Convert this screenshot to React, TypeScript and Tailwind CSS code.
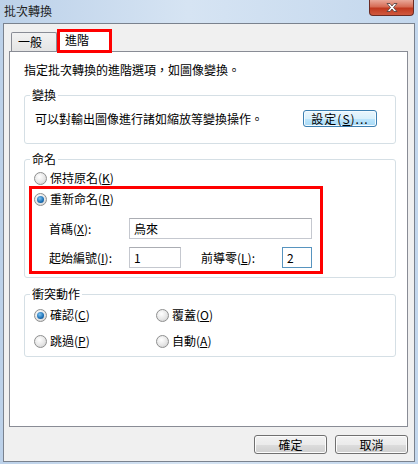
import React from 'react';

function Radio({ checked, label, hot }: { checked?: boolean; label: string; hot: string }) {
  return (
    <div className="flex h-[14px] items-center gap-[3px]">
      <span className="flex h-[13px] w-[13px] items-center justify-center rounded-full border border-[#8e8f8f] bg-[radial-gradient(circle_at_40%_35%,#ffffff,#e6e6e6_55%,#c9c9c9)]">
        {checked && (
          <span className="h-[7px] w-[7px] rounded-full bg-[radial-gradient(circle_at_40%_35%,#7fc3f0,#1b6fb5_60%,#0d3f74)]" />
        )}
      </span>
      <span className="leading-[14px]">
        {label}(<span className="underline">{hot}</span>)
      </span>
    </div>
  );
}

// group box with caption sitting on the top border line
function Group({ title, className, children }: { title: string; className?: string; children: React.ReactNode }) {
  return (
    <div className={`rounded-[3px] border border-[#d5dfe5] ${className ?? ''}`}>
      <div className="-mt-[8px] ml-[5px] w-fit bg-white px-[2px] leading-[14px]">{title}</div>
      {children}
    </div>
  );
}

function Field({ value, width, focused }: { value: string; width: string; focused?: boolean }) {
  return (
    <div
      className={`flex h-[21px] items-center border bg-white pl-[4px] ${width} ${
        focused ? 'border-[#5794bf]' : 'border-[#c5c8cf] border-t-[#abadb3]'
      }`}
    >
      {value}
    </div>
  );
}

function DlgButton({ children }: { children: React.ReactNode }) {
  return (
    <button className="flex h-[19px] w-[73px] items-center justify-center rounded-[3px] border border-[#707070] bg-[linear-gradient(#f2f2f2,#ebebeb_50%,#dddddd_51%,#cfcfcf)] leading-[14px] shadow-[inset_0_0_0_1px_#fcfcfc]">
      {children}
    </button>
  );
}

export default function App() {
  return (
    <div className="flex h-[464px] w-[418px] flex-col bg-[linear-gradient(to_right,#bcd1e9,#d6e4f3_45%,#c3d7ed)] font-['Noto_Sans_CJK_TC','Liberation_Sans',sans-serif] text-[12px] text-black">
      {/* title bar */}
      <div className="flex h-[23px] items-start justify-between pl-[4px] pr-[4px]">
        <span className="pt-[4px] leading-[14px] text-[#1e1e1e]">批次轉換</span>
        <div className="flex h-[16px] w-[45px] items-center justify-center rounded-b-[4px] border border-t-0 border-[#6b2b23] bg-[linear-gradient(#e9a899,#d66c55_45%,#c0391f_55%,#d0593f)]">
          <svg width="14" height="11" viewBox="0 0 14 11">
            <path
              d="M2 1.5h3l2 2.5 2-2.5h3l-3.5 4 3.5 4h-3l-2-2.5-2 2.5h-3l3.5-4z"
              fill="#fff"
              stroke="#4a3a3a"
              strokeWidth="0.8"
              strokeLinejoin="round"
            />
          </svg>
        </div>
      </div>

      {/* client area */}
      <div className="mx-[3px] flex h-[439px] flex-col border border-[#7a828e] bg-[#f0f0f0]">
        {/* tabs */}
        <div className="relative z-10 flex h-[27px] items-end pl-[7px]">
          <div className="flex h-[19px] w-[46px] items-center rounded-t-[2px] border border-b-0 border-[#898c95] bg-[linear-gradient(#f2f2f2,#e4e4e4)] pl-[6px] leading-[14px]">
            一般
          </div>
          <div className="mb-[-2px] flex h-[24px] w-[55px] items-start border-[3px] border-[#ff0000] bg-white pl-[5px] pt-[1px] leading-[14px]">
            進階
          </div>
        </div>

        {/* panel */}
        <div className="ml-[5px] flex h-[376px] w-[399px] flex-col border border-[#898c95] bg-white pl-[14px] pr-[11px]">
          <p className="pt-[11px] leading-[14px]">指定批次轉換的進階選項，如圖像變換。</p>

          <Group title="變換" className="mt-[18px] h-[49px]">
            <div className="flex items-center justify-between pl-[10px] pr-[18px] pt-[8px]">
              <span className="leading-[14px]">可以對輸出圖像進行諸如縮放等變換操作。</span>
              <button className="flex h-[17px] w-[74px] items-center justify-center rounded-[3px] border border-[#3c7fb1] bg-[linear-gradient(#eaf6fd,#d9f0fc_50%,#bee6fd_51%,#a7d9f5)] leading-[14px] tracking-[1px] shadow-[inset_0_0_0_1px_#f4fbff]">
                設定(<span className="underline">S</span>)...
              </button>
            </div>
          </Group>

          <Group title="命名" className="mt-[15px] h-[119px]">
            <div className="pl-[9px] pt-[5px]">
              <Radio label="保持原名" hot="K" />
            </div>
            <div className="ml-[4px] mt-[1px] h-[88px] w-[294px] border-[3px] border-[#ff0000] pl-[2px] pt-[3px]">
              <Radio checked label="重新命名" hot="R" />
              <div className="mt-[12px] flex items-center pl-[15px]">
                <span className="w-[80px]">
                  首碼(<span className="underline">X</span>):
                </span>
                <Field value="烏來" width="w-[183px]" />
              </div>
              <div className="mt-[8px] flex items-center pl-[15px]">
                <span className="w-[80px]">
                  起始編號(<span className="underline">I</span>):
                </span>
                <Field value="1" width="w-[52px]" />
                <span className="ml-[20px] w-[81px]">
                  前導零(<span className="underline">L</span>):
                </span>
                <Field value="2" width="w-[30px]" focused />
              </div>
            </div>
          </Group>

          <Group title="衝突動作" className="mt-[16px] h-[63px]">
            <div className="grid grid-cols-[122px_1fr] gap-y-[12px] pl-[9px] pt-[7px]">
              <Radio checked label="確認" hot="C" />
              <Radio label="覆蓋" hot="O" />
              <Radio label="跳過" hot="P" />
              <Radio label="自動" hot="A" />
            </div>
          </Group>
        </div>

        {/* dialog buttons */}
        <div className="ml-[5px] mt-[8px] flex w-[399px] justify-end gap-[8px]">
          <DlgButton>確定</DlgButton>
          <DlgButton>取消</DlgButton>
        </div>
      </div>
    </div>
  );
}
